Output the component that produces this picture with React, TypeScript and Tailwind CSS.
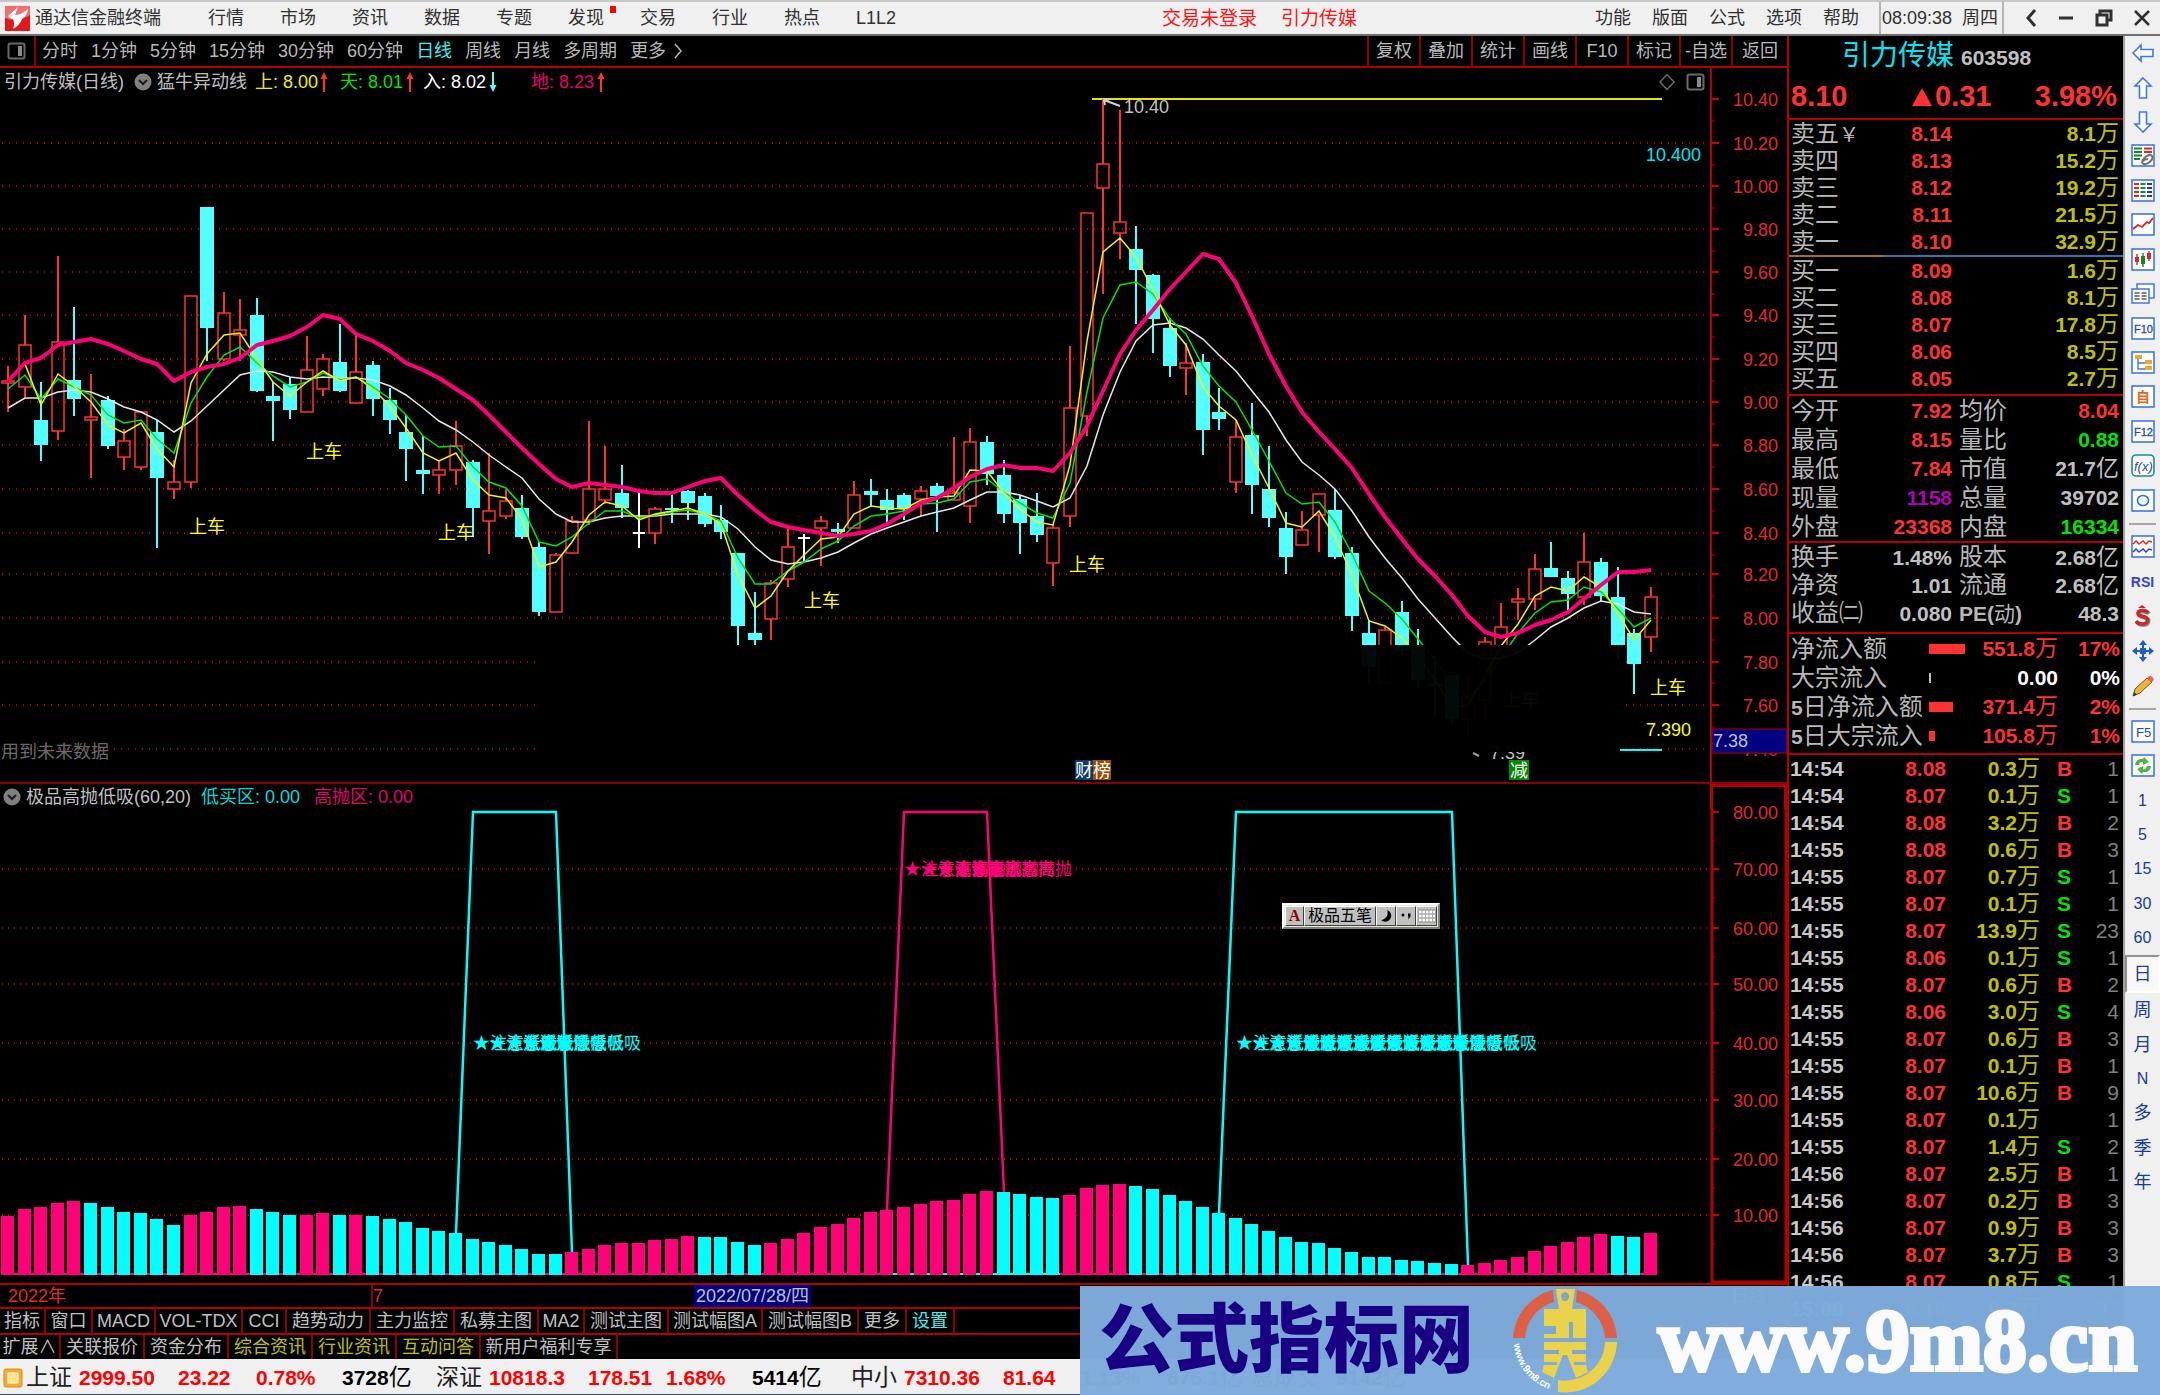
import React from "react";

/* ---------- shared chart geometry ---------- */

const STEP = 16.593;
const cx = (i: number) => Math.round(8 + i * STEP);
const py = (v: number) => Math.round(v / 2.24) - 4;
const iy = (v: number) => Math.round(v / 3) - 38;

const RED = "#ff3232";
const CYAN = "#54ffff";
const PINK = "#ff0078";
const AQUA = "#00ffff";

type Candle = [string, number, number, number, number];

/* kind, high, body top, body bottom, low (plot units, top down) */
const candles: Candle[] = [
  ["r", 615, 650, 653, 718], ["r", 501, 569, 664, 688], ["c", 652, 737, 793, 829], ["r", 370, 562, 761, 782],
  ["c", 484, 648, 691, 728], ["r", 635, 731, 737, 867], ["c", 683, 692, 796, 802], ["r", 757, 785, 819, 849],
  ["r", 720, 720, 842, 849], ["c", 737, 764, 867, 1024], ["r", 827, 876, 892, 913], ["r", 459, 459, 876, 890],
  ["c", 259, 259, 530, 604], ["r", 450, 498, 600, 604], ["r", 467, 536, 546, 604], ["c", 464, 501, 671, 674],
  ["c", 652, 683, 694, 785], ["c", 640, 656, 715, 735], ["r", 548, 624, 718, 718], ["r", 588, 600, 667, 684],
  ["c", 521, 608, 671, 674], ["r", 546, 630, 698, 698], ["c", 605, 613, 691, 728], ["c", 665, 692, 738, 769],
  ["c", 726, 764, 802, 873], ["c", 773, 850, 859, 903], ["r", 829, 849, 861, 903], ["r", 739, 795, 849, 882],
  ["c", 827, 830, 933, 1000], ["r", 810, 940, 963, 1037], ["r", 892, 918, 953, 959], ["c", 905, 935, 1000, 1004],
  ["c", 1010, 1022, 1168, 1175], ["r", 1036, 1040, 1168, 1168], ["r", 951, 963, 1034, 1037], ["r", 739, 892, 960, 973],
  ["r", 796, 892, 916, 925], ["c", 838, 901, 934, 957], ["w", 900, 990, 990, 1024], ["r", 932, 936, 990, 1014],
  ["c", 905, 935, 938, 968], ["c", 893, 895, 923, 960], ["c", 901, 908, 970, 977], ["c", 927, 960, 988, 1004],
  ["c", 1035, 1035, 1199, 1240], ["c", 1123, 1214, 1229, 1240], ["r", 1096, 1101, 1182, 1229], ["r", 981, 1022, 1094, 1111],
  ["w", 992, 1002, 1002, 1055], ["r", 951, 963, 980, 1064], ["c", 968, 982, 988, 1013], ["r", 874, 906, 979, 979],
  ["c", 870, 895, 904, 929], ["c", 891, 917, 938, 967], ["c", 900, 906, 936, 961], ["r", 885, 895, 914, 951],
  ["c", 879, 885, 907, 988], ["r", 776, 900, 916, 916], ["r", 756, 787, 930, 967], ["c", 773, 787, 857, 883],
  ["c", 827, 861, 947, 967], ["c", 906, 914, 968, 1037], ["c", 900, 951, 994, 1010], ["r", 970, 979, 1057, 1108],
  ["r", 571, 710, 953, 977], ["r", 273, 273, 727, 772], ["r", 18, 163, 217, 454], ["r", 43, 294, 318, 376],
  ["c", 302, 353, 402, 521], ["c", 410, 413, 510, 587], ["c", 509, 532, 617, 641], ["r", 565, 610, 621, 682],
  ["c", 588, 606, 759, 816], ["c", 665, 720, 735, 759], ["r", 737, 774, 876, 900], ["c", 699, 770, 883, 948],
  ["c", 796, 891, 957, 977], ["c", 944, 979, 1044, 1082], ["r", 941, 983, 1017, 1017], ["r", 902, 902, 949, 1032],
  ["c", 892, 938, 1044, 1048], ["c", 1021, 1036, 1175, 1210], ["c", 1185, 1214, 1290, 1327], ["r", 1200, 1208, 1325, 1325],
  ["c", 1142, 1166, 1255, 1262], ["c", 1206, 1242, 1320, 1340], ["c", 1265, 1328, 1332, 1397], ["c", 1308, 1308, 1407, 1416],
  ["r", 1310, 1360, 1410, 1440], ["r", 1224, 1235, 1365, 1407], ["r", 1147, 1201, 1245, 1260], ["r", 1113, 1137, 1144, 1186],
  ["r", 1038, 1070, 1138, 1162], ["c", 1011, 1069, 1089, 1089], ["c", 1076, 1092, 1126, 1163], ["r", 991, 1056, 1134, 1151],
  ["c", 1046, 1056, 1131, 1145], ["c", 1066, 1133, 1242, 1272], ["c", 1205, 1214, 1284, 1351], ["r", 1112, 1134, 1222, 1257],
];

const earthLine = [
  650, 609, 597, 569, 562, 556, 567, 582, 600, 612, 650, 630, 618, 612, 598, 569, 559, 548, 528, 501, 510, 544, 559, 582, 609,
  625, 643, 667, 693, 726, 764, 799, 835, 869, 888, 878, 883, 887, 895, 900, 900, 886, 873, 868, 904, 939, 966, 976, 984, 990,
  996, 993, 986, 971, 948, 923, 911, 889, 865, 846, 838, 845, 845, 851, 812, 750, 671, 588, 535, 490, 444, 405, 365, 376, 430,
  505, 590, 660, 719, 764, 802, 845, 903, 955, 1004, 1049, 1087, 1128, 1175, 1211, 1224, 1214, 1197, 1184, 1168, 1137, 1106,
  1077, 1077, 1074,
];
const entryLine = [
  711, 688, 687, 674, 670, 674, 690, 708, 718, 738, 764, 740, 706, 670, 637, 627, 630, 640, 645, 640, 643, 643, 648, 661, 680,
  710, 740, 760, 787, 815, 842, 868, 915, 948, 965, 965, 957, 953, 952, 952, 948, 947, 947, 954, 982, 1022, 1050, 1060, 1056,
  1046, 1033, 1013, 993, 979, 965, 951, 943, 935, 917, 898, 899, 905, 918, 932, 912, 840, 725, 630, 560, 525, 520, 530, 556,
  592, 628, 672, 718, 782, 830, 860, 892, 940, 998, 1047, 1092, 1137, 1180, 1222, 1258, 1272, 1270, 1258, 1230, 1200, 1180,
  1158, 1143, 1149, 1167, 1171,
];
const skyLine = [
  668, 637, 690, 646, 662, 681, 725, 744, 738, 780, 811, 700, 640, 592, 574, 610, 638, 663, 652, 632, 647, 641, 662, 690, 725,
  772, 798, 795, 842, 875, 890, 930, 1010, 1020, 1000, 968, 941, 940, 957, 950, 944, 938, 948, 963, 1045, 1105, 1105, 1076,
  1055, 1025, 1008, 975, 953, 948, 940, 925, 922, 915, 876, 869, 898, 923, 945, 957, 878, 675, 508, 435, 427, 455, 510, 545,
  616, 660, 697, 760, 828, 900, 926, 920, 965, 1037, 1120, 1146, 1182, 1228, 1275, 1325, 1360, 1320, 1270, 1215, 1170, 1145,
  1140, 1110, 1122, 1160, 1201, 1181,
];
const upperLine = [
  612, 703, 634, 660, 697, 748, 767, 744, 802, 842, 655, 590, 547, 542, 600, 652, 683, 652, 627, 650, 641, 668, 705, 755, 810,
  828, 812, 872, 906, 912, 958, 1066, 1054, 1010, 950, 920, 930, 960, 948, 940, 934, 948, 970, 1085, 1157, 1131, 1075, 1040,
  1003, 998, 947, 930, 934, 936, 917, 910, 907, 849, 852, 900, 937, 965, 972, 838, 560, 360, 329, 372, 445, 525, 570, 662, 705,
  738, 815, 890, 967, 976, 940, 1000, 1085, 1188, 1198, 1225, 1265, 1320, 1380, 1375, 1310, 1243, 1195, 1131, 1111, 1119, 1088,
  1110, 1170, 1230, 1184,
];

const points = (list: number[], from = 0) => list.map((v, i) => `${cx(i + from)},${py(v)}`).join(" ");

const priceGrid: [number, string][] = [
  [18, "10.40"], [116, "10.20"], [213, "10.00"], [310, "9.80"], [405, "9.60"], [502, "9.40"], [600, "9.20"], [697, "9.00"],
  [794, "8.80"], [892, "8.60"], [990, "8.40"], [1083, "8.20"], [1181, "8.00"], [1278, "7.80"], [1376, "7.60"], [1473, "7.40"],
];

const signals: [number, number][] = [[189, 975], [306, 807], [438, 988], [804, 1140], [1069, 1060], [1503, 1362], [1650, 1335]];

const runs: [string, number[]][] = [
  ["m", [1335, 1313, 1309, 1296, 1291]],
  ["c", [1295, 1309, 1322, 1327, 1345, 1363]],
  ["m", [1331, 1322, 1309, 1304]],
  ["c", [1313, 1322, 1331]],
  ["m", [1331, 1327]],
  ["c", [1331]],
  ["m", [1331]],
  ["c", [1335, 1345, 1354, 1371, 1380, 1385, 1403, 1412, 1421, 1435, 1448, 1448]],
  ["m", [1444, 1435, 1421, 1416, 1416, 1408, 1403, 1395]],
  ["c", [1399, 1399, 1412, 1421]],
  ["m", [1416, 1403, 1385, 1367, 1358, 1340, 1322, 1318, 1309, 1300, 1291, 1287, 1269, 1260]],
  ["c", [1264, 1269, 1278, 1282]],
  ["m", [1273, 1251, 1242, 1238]],
  ["c", [1246, 1255, 1273, 1291, 1309, 1327, 1340, 1358, 1381, 1399, 1412, 1417, 1430, 1444, 1458, 1458, 1467, 1471, 1476, 1480]],
  ["m", [1481, 1476, 1467, 1458, 1440, 1426, 1412, 1399, 1390]],
  ["c", [1395, 1399]],
  ["m", [1386]],
];
const bars = runs.flatMap(([kind, list]) => list.map((v) => ({ kind, v })));

const levelGrid: [number, string][] = [
  [123, "80.00"], [294, "70.00"], [470, "60.00"], [640, "50.00"], [817, "40.00"], [988, "30.00"], [1163, "20.00"], [1333, "10.00"],
];

const range = (a: number, b: number) => Array.from({ length: b - a + 1 }, (_, i) => a + i);

/* ---------- charts ---------- */

function PriceChart() {
  return (
    <svg viewBox="0 0 1787 687" className="block w-full overflow-visible" fontSize="18" aria-label="日线 K线图">
      {priceGrid.slice(1).map(([v]) => (
        <line key={v} x1="2" x2="1707" y1={py(v)} y2={py(v)} stroke="#b40000" strokeWidth="2" strokeDasharray="1 6" />
      ))}
      <line x1="1092" x2="1662" y1="4" y2="4" stroke="#e6e600" strokeWidth="2" />
      {candles.map(([k, h, t, b, l], i) => {
        const x = cx(i);
        const color = k === "r" ? RED : k === "c" ? CYAN : "#ffffff";
        const top = py(t);
        const height = Math.max(py(b) - top, 2);
        return (
          <g key={i} stroke={color} strokeWidth="2" fill="none">
            {h < t && <line x1={x} x2={x} y1={py(h)} y2={top} />}
            {l > b && <line x1={x} x2={x} y1={py(b)} y2={py(l)} />}
            {k === "w" && <line x1={x - 6} x2={x + 6} y1={top} y2={top} />}
            {k === "r" && <rect x={x - 6} y={top} width="12" height={height} strokeWidth="1.5" />}
            {k === "c" && <rect x={x - 7} y={top} width="14" height={height} fill={color} stroke="none" />}
          </g>
        );
      })}
      <g fill="none" strokeWidth="1.5">
        <polyline points={points(entryLine)} stroke="#e8e8e8" />
        <polyline points={points(skyLine)} stroke="#00e600" />
        <polyline points={points(upperLine, 1)} stroke="#f5f500" />
        <polyline points={points(earthLine)} stroke={PINK} strokeWidth="4" strokeLinejoin="round" />
      </g>
      <text x="1490" y="664" fill="#c0c0c0">7.39</text>
      <g fill="#ffff00">
        {signals.slice(0, 6).map(([x, v]) => (
          <text key={x} x={x} y={py(v) + 7}>上车</text>
        ))}
      </g>
      <rect x="537" y="550" width="1084" height="107" fill="#000" opacity="0.96" />
      <text x="1650" y={py(1335) + 7} fill="#ffff00">上车</text>
      <path d="M1473 658l6 3" stroke="#a0a0a0" strokeWidth="2" />
      <path d="M1120 11l-16 -6m1 5l-1 -5l6 -1" stroke="#d0d0d0" strokeWidth="2" fill="none" />
      <text x="1124" y="18" fill="#c0c0c0">10.40</text>
      <text x="1646" y="66" fill="#00e6f0">10.400</text>
      <text x="1646" y="641" fill="#ffff00">7.390</text>
      <line x1="1620" x2="1662" y1="655" y2="655" stroke={AQUA} strokeWidth="2" />
      <text x="1" y="663" fill="#6a6a6a">用到未来数据</text>
      <rect x="1075" y="665" width="18" height="20" fill="#0a3a6e" />
      <rect x="1093" y="665" width="18" height="20" fill="#9a4c00" />
      <rect x="1509" y="665" width="20" height="20" fill="#008a00" />
      <g fill="#fff">
        <text x="1075" y="682">财</text>
        <text x="1093" y="682">榜</text>
        <text x="1510" y="682">减</text>
      </g>
      <line x1="1711" x2="1711" y1="0" y2="687" stroke="#b40000" strokeWidth="2" />
      {priceGrid.map(([v, label], i) => (
        <g key={label}>
          <line x1="1711" x2="1719" y1={py(v)} y2={py(v)} stroke="#c80000" strokeWidth="2" />
          {i < 15 && <line x1="1711" x2="1715" y1={py(v + 49)} y2={py(v + 49)} stroke="#c80000" strokeWidth="1" />}
          <text x="1778" y={py(v) + 7} fill="#e62828" textAnchor="end">{label}</text>
        </g>
      ))}
      <rect x="1712" y="634" width="75" height="24" fill="#000080" stroke="#b40000" />
      <text x="1713" y="652" fill="#c0c0c0">7.38</text>
    </svg>
  );
}

function LevelChart() {
  const base = iy(1511);
  const band = (from: number, to: number, start: number, end: number) =>
    `${cx(from - 1)},${iy(start)} ${cx(from)},${iy(123)} ${cx(to)},${iy(123)} ${cx(to + 1)},${iy(end)}`;
  return (
    <svg viewBox="0 0 1787 474" className="block w-full overflow-visible" fontSize="17" aria-label="极品高抛低吸">
      {levelGrid.slice(1).map(([v]) => (
        <line key={v} x1="2" x2="1709" y1={iy(v)} y2={iy(v)} stroke="#b40000" strokeWidth="2" strokeDasharray="1 5" />
      ))}
      <line x1="1" x2="1657" y1={base - 1} y2={base - 1} stroke={PINK} strokeWidth="2" />
      <line x1="880" x2="1060" y1={base - 1} y2={base - 1} stroke={AQUA} strokeWidth="2" />
      {bars.map(({ kind, v }, i) => (
        <rect key={i} x={cx(i) - 7} y={iy(v)} width="13" height={base - iy(v)} fill={kind === "m" ? PINK : AQUA} />
      ))}
      <g fill="none" strokeWidth="2.5">
        <polyline points={band(28, 33, 1385, 1444)} stroke={AQUA} />
        <polyline points={band(54, 59, 1318, 1264)} stroke={PINK} />
        <polyline points={band(74, 87, 1327, 1481)} stroke={AQUA} />
      </g>
      {range(28, 33).map((i) => <text key={i} x={cx(i)} y="240" fill={AQUA}>★注意低吸</text>)}
      {range(54, 59).map((i) => <text key={i} x={cx(i)} y="66" fill={PINK}>★注意高抛</text>)}
      {range(74, 87).map((i) => <text key={i} x={cx(i)} y="240" fill={AQUA}>★注意低吸</text>)}
      <path d="M1712 0V473H1786V0" fill="none" stroke="#b40000" strokeWidth="3" />
      {levelGrid.map(([v, label]) => (
        <g key={label}>
          <line x1="1712" x2="1719" y1={iy(v)} y2={iy(v)} stroke="#c80000" strokeWidth="2" />
          <line x1="1712" x2="1715" y1={iy(v + 87)} y2={iy(v + 87)} stroke="#c80000" />
          <text x="1778" y={iy(v) + 7} fontSize="18" fill="#e62828" textAnchor="end">{label}</text>
        </g>
      ))}
    </svg>
  );
}

/* ---------- small drawings ---------- */

function Chevron() {
  return (
    <svg viewBox="0 0 18 18" className="size-[18px] shrink-0">
      <circle cx="9" cy="9" r="8.5" fill="#808080" />
      <path d="M5 7l4 4l4 -4" fill="none" stroke="#1a1a1a" strokeWidth="2" />
    </svg>
  );
}

function Arrow({ down }: { down?: boolean }) {
  return (
    <svg viewBox="0 0 8 20" className="h-5 w-2 shrink-0">
      {down ? (
        <path d="M3 0H5V13H7.5L4 20L0.5 13H3Z" fill={CYAN} />
      ) : (
        <path d="M3 20H5V7H7.5L4 0L0.5 7H3Z" fill={RED} />
      )}
    </svg>
  );
}

function PaneIcon({ className }: { className: string }) {
  return (
    <svg viewBox="0 0 20 18" className={className}>
      <rect x="1.500" y="1.500" width="16" height="15" rx="2" fill="none" stroke="#6a6a6a" strokeWidth="2" />
      <rect x="11" y="4" width="4" height="10" fill="#8a8a8a" />
    </svg>
  );
}

function Framed({ children, color = "#3c78e6" }: { children: React.ReactNode; color?: string }) {
  return (
    <svg viewBox="0 0 24 24" className="size-6" fontSize="11">
      <rect x="1" y="1" width="22" height="21" fill="#fff" stroke={color} strokeWidth="1.6" />
      {children}
    </svg>
  );
}

const blue = "#3c78e6";
const arrowOutline = "M2 12L10 4V8.500H22V15.500H10V20Z";

const toolIcons: [string, React.ReactNode][] = [
  ["后退", <svg viewBox="0 0 24 24" className="size-6"><path d={arrowOutline} fill="#fff" stroke={blue} strokeWidth="1.6" /></svg>],
  ["向上", <svg viewBox="0 0 24 24" className="size-6"><path d={arrowOutline} transform="rotate(90 12 12)" fill="#fff" stroke={blue} strokeWidth="1.6" /></svg>],
  ["向下", <svg viewBox="0 0 24 24" className="size-6"><path d={arrowOutline} transform="rotate(-90 12 12)" fill="#fff" stroke={blue} strokeWidth="1.6" /></svg>],
  ["报价关联", <Framed><path d="M3 4.500h8M3 8h8M3 11.500h8M3 15h6" stroke="#0a8a28" strokeWidth="2" /><path d="M13 4.500h8M13 8h8" stroke="#e61e1e" strokeWidth="2" /><path d="M11 17c2-4 8-8 10-5s-4 9-8 8s-1-5 4-5" fill="none" stroke="#707070" strokeWidth="2" /></Framed>],
  ["行情列表", <Framed><g strokeWidth="2"><path d="M3 5h5M3 9h5M3 13h5M3 17h5" stroke="#f02020" /><path d="M9.500 5h5M9.500 9h5M9.500 13h5M9.500 17h5" stroke="#109030" /><path d="M16 5h5M16 9h5M16 13h5M16 17h5" stroke="#2030e0" /></g></Framed>],
  ["分时图", <Framed><path d="M2 16l5-4l4 2l5-5l2 1l4-5" fill="none" stroke="#e62020" strokeWidth="1.8" /></Framed>],
  ["K线图", <Framed><path d="M6 6v11M18 3v10" stroke="#e62020" strokeWidth="1.4" /><path d="M12 5v14" stroke="#0a8a28" strokeWidth="1.4" /><path d="M4 9h4v5h-4zM16 5h4v6h-4z" fill="#e62020" /><path d="M10 8h4v8h-4z" fill="#0a8a28" /></Framed>],
  ["窗口", <svg viewBox="0 0 24 24" className="size-6"><path d="M6 2h17v14h-17z" fill="#fff" stroke={blue} strokeWidth="1.5" /><path d="M1 7h17v14h-17z" fill="#fff" stroke={blue} strokeWidth="1.5" /><path d="M3.500 11h5M3.500 14h5M3.500 17h5M10.500 11h5M10.500 14h5M10.500 17h5" stroke="#555" strokeWidth="1.5" /></svg>],
  ["F10资料", <Framed><text x="3" y="16" fill="#1e46c8" stroke="#1e46c8" strokeWidth="0.3">F10</text></Framed>],
  ["板块树", <Framed><path d="M7 8v10h8M7 12h8" fill="none" stroke={blue} strokeWidth="1.4" /><path d="M4 4h7v4h-7zM14 9h7v4h-7zM14 15h7v4h-7z" fill="#f5a623" /></Framed>],
  ["自选", <Framed><text x="5" y="17" fontSize="14" fill="#f06414" fontWeight="bold">自</text></Framed>],
  ["F12交易", <Framed><text x="3" y="16" fill="#1e46c8" stroke="#1e46c8" strokeWidth="0.3">F12</text></Framed>],
  ["公式", <svg viewBox="0 0 24 24" className="size-6" fontSize="13"><rect x="1" y="1" width="22" height="21" rx="4" fill="#fff" stroke="#148c96" strokeWidth="1.6" /><text x="3" y="16.500" fill="#1e46c8" fontStyle="italic">f(x)</text></svg>],
  ["圆", <Framed><ellipse cx="12" cy="11.500" rx="5.500" ry="5" fill="none" stroke="#1e6ee6" strokeWidth="1.6" /></Framed>],
];

const drawIcons: [string, React.ReactNode][] = [
  ["多图", <Framed><path d="M2 9l3-3l3 3l4-3l3 3l3-3l3 1" fill="none" stroke="#e62020" strokeWidth="1.5" /><path d="M2 17l3-3l3 3l4-3l3 3l3-3l3 1" fill="none" stroke="#2040e0" strokeWidth="1.5" /></Framed>],
  ["RSI指标", <span className="text-[14px] font-bold text-[#3246d2]">RSI</span>],
  ["资金", <svg viewBox="0 0 24 24" className="size-6"><path d="M17 9q-2-3-6-2.500q-5 .5-4 3.500q.5 1.500 5 2.500q5 1 4.500 4q-.5 3.500-5.500 3.500q-4 0-6-3" fill="none" stroke="#909090" strokeWidth="4" transform="translate(1 1)" /><path d="M17 9q-2-3-6-2.500q-5 .5-4 3.500q.5 1.500 5 2.500q5 1 4.500 4q-.5 3.500-5.500 3.500q-4 0-6-3" fill="none" stroke="#c82828" strokeWidth="3.5" /><path d="M7 4l4-3l4 3z" fill="#c82828" /></svg>],
  ["移动", <svg viewBox="0 0 24 24" className="size-6"><path d="M12 1l4 5h-8zM12 23l4-5h-8zM1 12l5-4v8zM23 12l-5-4v8zM9 9h6v6h-6z" fill="#1e5ac8" /><path d="M12 5v14M5 12h14" stroke="#1e5ac8" strokeWidth="2" /></svg>],
  ["画笔", <svg viewBox="0 0 24 24" className="size-6"><path d="M2 22l2-7l12-11l5 4l-12 11z" fill="#f0b43c" stroke="#785014" strokeWidth="1" /><path d="M16 4l3-2.500q3 1 4 4l-2 2.500z" fill="#e66464" /><path d="M2 22l1-4l3 2.500z" fill="#333" /></svg>],
];

const periods = ["1", "5", "15", "30", "60", "日", "周", "月", "N", "多", "季", "年"];

function ToolButton({ label, children }: { label: string; children: React.ReactNode }) {
  return (
    <button type="button" aria-label={label} className="flex flex-1 items-center justify-center">
      {children}
    </button>
  );
}

function Sidebar() {
  return (
    <aside className="w-[37px] shrink-0 border-l-2 border-[#a0a0a0] bg-[#f0f0f0] text-[18px] leading-none text-[#143c96]">
      <div className="flex h-[482px] flex-col">
        {toolIcons.map(([label, icon]) => <ToolButton key={label} label={label}>{icon}</ToolButton>)}
      </div>
      <hr className="mx-1 my-[5px] border-t-2 border-[#a8a8a8]" />
      <div className="flex h-[173px] flex-col">
        {drawIcons.map(([label, icon]) => <ToolButton key={label} label={label}>{icon}</ToolButton>)}
      </div>
      <hr className="mx-1 my-[5px] border-t-2 border-[#a8a8a8]" />
      <div className="flex h-[484px] flex-col">
        <ToolButton label="F5切换"><Framed><text x="5" y="16.500" fontSize="13" fill="#1e46c8">F5</text></Framed></ToolButton>
        <ToolButton label="刷新">
          <Framed>
            <path d="M4 11q1-7 8-6l1-2l5 5l-6 3l0-3q-3-1-4 3zM20 12q-1 7-8 6l-1 2l-5-5l6-3l0 3q3 1 4-3z" fill="#50b43c" />
          </Framed>
        </ToolButton>
        {periods.map((p) => (
          <button
            key={p}
            type="button"
            className={
              p === "日"
                ? "flex flex-1 items-center justify-center border-2 border-r-white border-b-white border-l-[#909090] border-t-[#909090] bg-[#f8f8f8]"
                : "flex flex-1 items-center justify-center"
            }
          >
            <span className={/\d|N/.test(p) ? "text-[16px]" : "text-[18px]"}>{p}</span>
          </button>
        ))}
      </div>
    </aside>
  );
}

/* ---------- header ---------- */

function Header() {
  return (
    <header className="flex h-[36px] items-center border-t-2 border-b-2 border-t-[#c8c8c8] border-b-[#6e6e6e] bg-[#f0f0f0] text-[18px] leading-none whitespace-nowrap text-[#303030]">
      <svg viewBox="0 0 25 25" className="ml-[5px] size-[25px]">
        <rect width="25" height="25" fill="#e11919" />
        <path d="M0 0h25v9q-12 8-25 3z" fill="#f06e6e" />
        <path d="M3 10L13 1L10 9q6 0 13-6q-1 7-6 10q-2 6-9 10q2-6 0-10q-3 0-5-3z" fill="#fff" />
      </svg>
      <span className="ml-[5px] w-[173px]">通达信金融终端</span>
      <nav className="flex gap-9">
        {["行情", "市场", "资讯", "数据", "专题", "发现", "交易", "行业", "热点", "L1L2"].map((m) => (
          <button key={m} type="button" className="relative">
            {m}
            {m === "发现" && <i className="absolute -top-[3px] -right-3 h-[7px] w-[6px] bg-[#ff0000]" />}
          </button>
        ))}
      </nav>
      <div className="flex-1" />
      <div className="flex gap-6 text-[19px] text-[#ff1414]">
        <button type="button">交易未登录</button>
        <button type="button">引力传媒</button>
      </div>
      <nav className="ml-[238px] flex gap-[21px]">
        {["功能", "版面", "公式", "选项", "帮助"].map((m) => <button key={m} type="button">{m}</button>)}
      </nav>
      <div className="ml-5 flex h-full w-[125px] items-center justify-between border-x-2 border-[#b4b4b4] pr-1 pl-px">
        <time>08:09:38</time>
        <span>周四</span>
      </div>
      <div className="flex w-[156px] items-center justify-between pr-[10px] pl-5">
        <button type="button" aria-label="返回">
          <svg viewBox="0 0 14 18" className="h-[18px] w-[14px]"><path d="M11 1L4 9l7 8" fill="none" stroke="#303030" strokeWidth="3" /></svg>
        </button>
        <button type="button" aria-label="最小化">
          <svg viewBox="0 0 14 18" className="h-[18px] w-[14px]"><path d="M0 9h14" stroke="#303030" strokeWidth="3" /></svg>
        </button>
        <button type="button" aria-label="还原">
          <svg viewBox="0 0 18 18" className="size-[18px]"><path d="M5 5V2h11v9h-3M2 6h10v10H2z" fill="none" stroke="#303030" strokeWidth="3" /></svg>
        </button>
        <button type="button" aria-label="关闭">
          <svg viewBox="0 0 16 16" className="size-4"><path d="M1 1l14 14M15 1L1 15" stroke="#303030" strokeWidth="2.500" /></svg>
        </button>
      </div>
    </header>
  );
}

function Toolbar() {
  return (
    <div className="flex h-[32px] items-stretch border-b-2 border-[#b40000] text-[18px] leading-none whitespace-nowrap text-[#b8b8b8]">
      <button type="button" aria-label="侧栏" className="flex w-[36px] items-center justify-center border-r-2 border-[#8c0000]">
        <PaneIcon className="h-[18px] w-5" />
      </button>
      <nav className="flex items-center gap-[13px] pl-[6px]">
        {["分时", "1分钟", "5分钟", "15分钟", "30分钟", "60分钟", "日线", "周线", "月线", "多周期"].map((p) => (
          <button key={p} type="button" className={p === "日线" ? "text-[#3cf0f0]" : ""}>{p}</button>
        ))}
        <button type="button" className="flex items-center gap-2">
          更多
          <svg viewBox="0 0 8 16" className="h-4 w-2"><path d="M1 1l6 7l-6 7" fill="none" stroke="#b8b8b8" strokeWidth="1.500" /></svg>
        </button>
      </nav>
      <div className="flex-1" />
      {["复权", "叠加", "统计", "画线", "F10", "标记", "-自选", "返回"].map((b) => (
        <button key={b} type="button" className="w-[52px] border-l-2 border-[#8c0000] text-center last:w-[56px]">{b}</button>
      ))}
    </div>
  );
}

/* ---------- quote panel ---------- */

const asks = [["卖五", "8.14", "8.1万"], ["卖四", "8.13", "15.2万"], ["卖三", "8.12", "19.2万"], ["卖二", "8.11", "21.5万"], ["卖一", "8.10", "32.9万"]];
const bids = [["买一", "8.09", "1.6万"], ["买二", "8.08", "8.1万"], ["买三", "8.07", "17.8万"], ["买四", "8.06", "8.5万"], ["买五", "8.05", "2.7万"]];

const R = "text-[#ff3232]";
const G = "text-[#00e600]";
const W = "text-[#c0c0c0]";
const facts = [
  ["今开", "7.92", R, "均价", "8.04", R],
  ["最高", "8.15", R, "量比", "0.88", G],
  ["最低", "7.84", R, "市值", "21.7亿", W],
  ["现量", "1158", "text-[#b400b4]", "总量", "39702", W],
  ["外盘", "23368", R, "内盘", "16334", G],
];
const shares = [
  ["换手", "1.48%", W, "股本", "2.68亿", W],
  ["净资", "1.01", W, "流通", "2.68亿", W],
  ["收益㈡", "0.080", W, "PE(动)", "48.3", W],
];
const flows = [
  ["", "净流入额", "w-[36px]", "551.8万", "17%", R],
  ["", "大宗流入", "w-[2px]", "0.00", "0%", "text-white"],
  ["5", "日净流入额", "w-[24px]", "371.4万", "2%", R],
  ["5", "日大宗流入", "w-[6px]", "105.8万", "1%", R],
];
const ticks = [
  ["14:54", "8.08", "0.3", "B", "1"], ["14:54", "8.07", "0.1", "S", "1"], ["14:54", "8.08", "3.2", "B", "2"],
  ["14:55", "8.08", "0.6", "B", "3"], ["14:55", "8.07", "0.7", "S", "1"], ["14:55", "8.07", "0.1", "S", "1"],
  ["14:55", "8.07", "13.9", "S", "23"], ["14:55", "8.06", "0.1", "S", "1"], ["14:55", "8.07", "0.6", "B", "2"],
  ["14:55", "8.06", "3.0", "S", "4"], ["14:55", "8.07", "0.6", "B", "3"], ["14:55", "8.07", "0.1", "B", "1"],
  ["14:55", "8.07", "10.6", "B", "9"], ["14:55", "8.07", "0.1", "", "1"], ["14:55", "8.07", "1.4", "S", "2"],
  ["14:56", "8.07", "2.5", "B", "1"], ["14:56", "8.07", "0.2", "B", "3"], ["14:56", "8.07", "0.9", "B", "3"],
  ["14:56", "8.07", "3.7", "B", "3"], ["14:56", "8.07", "0.8", "S", "1"],
];

/* Digits are bold, Chinese unit characters stay light and larger. */
function Num({ value }: { value: string }) {
  const unit = value.match(/[万亿]$/)?.[0];
  return (
    <>
      {unit ? value.slice(0, -1) : value}
      {unit && <span className="text-[23px] font-normal">{unit}</span>}
    </>
  );
}

function Book({ rows, yen }: { rows: string[][]; yen?: boolean }) {
  return (
    <table className="w-full table-fixed">
      <tbody>
        {rows.map(([name, price, vol], i) => (
          <tr key={name} className="h-[27px]">
            <th scope="row" className="w-[95px] pl-[2px] text-left text-[24px] font-normal text-[#b8b8b8]">
              {name}{yen && i === 0 && <span className="text-[20px]">￥</span>}
            </th>
            <td className="w-[68px] text-right font-bold text-[#ff3232]">{price}</td>
            <td className="pr-[4px] text-right font-bold text-[#c0c000]"><Num value={vol} /></td>
          </tr>
        ))}
      </tbody>
    </table>
  );
}

function Facts({ rows, className }: { rows: string[][]; className: string }) {
  return (
    <table className="w-full table-fixed">
      <tbody>
        {rows.map(([a, av, ac, b, bv, bc]) => (
          <tr key={a} className={className}>
            <th scope="row" className="w-[78px] pl-[2px] text-left text-[24px] font-normal text-[#b8b8b8]">{a}</th>
            <td className={"w-[85px] text-right font-bold " + ac}>{av}</td>
            <th scope="row" className="w-[78px] pl-[7px] text-left text-[24px] font-normal text-[#b8b8b8]">
              {b === "PE(动)" ? <><b className="text-[21px]">PE(</b><span className="text-[21px]">动</span><b className="text-[21px]">)</b></> : b}
            </th>
            <td className={"pr-[4px] text-right font-bold " + bc}><Num value={bv} /></td>
          </tr>
        ))}
      </tbody>
    </table>
  );
}

function QuotePanel() {
  return (
    <section className="w-[336px] shrink-0 border-l-2 border-[#b40000] bg-black text-[21px] leading-none whitespace-nowrap">
      <div className="flex h-[39px] items-center pl-[53px] gap-[7px]">
        <h1 className="text-[28px] text-[#00e6f5]">引力传媒</h1>
        <span className="pt-1 font-bold text-[#c0c0c0]">603598</span>
      </div>
      <div className="flex h-[45px] items-center border-b-2 border-[#b40000] pr-[6px] pl-[2px] text-[29px] font-bold text-[#ff3232]">
        <span className="w-[121px]">8.10</span>
        <svg viewBox="0 0 20 18" className="mr-[3px] h-[18px] w-5"><path d="M10 0L20 18H0Z" fill={RED} /></svg>
        <span>0.31</span>
        <span className="flex-1 text-right">3.98%</span>
      </div>
      <Book rows={asks} yen />
      <div className="flex h-[2px]"><i className="w-[95px] bg-[#a07800]" /><i className="flex-1 bg-[#2878b4]" /></div>
      <div className="border-b-2 border-[#b40000] pb-[2px]"><Book rows={bids} /></div>
      <div className="border-b-2 border-[#b40000]"><Facts rows={facts} className="h-[29px]" /></div>
      <div className="border-b-2 border-[#b40000] pb-[5px]"><Facts rows={shares} className="h-[28px]" /></div>
      <table className="mb-[3px] w-full table-fixed">
        <tbody>
          {flows.map(([n, label, w, amount, pct, color]) => (
            <tr key={label} className="h-[29px]">
              <th scope="row" className="w-[140px] pl-[2px] text-left text-[24px] font-normal text-[#b8b8b8]">
                {n && <b className="text-[21px]">{n}</b>}{label}
              </th>
              <td className="w-[36px]"><i className={(amount === "0.00" ? "block h-[10px] bg-[#c0c0c0] " : "block h-[10px] bg-[#ff3232] ") + w} /></td>
              <td className={"w-[93px] text-right font-bold " + color}><Num value={amount} /></td>
              <td className={"pr-[3px] text-right font-bold " + color}>{pct}</td>
            </tr>
          ))}
        </tbody>
      </table>
      <div className="border-t-2 border-[#b40000]">
        <table className="w-full table-fixed">
          <tbody>
            {[...ticks, ["15:00", "8.10", "9.7", "", "97"]].map(([t, p, v, s, n], i) => (
              <tr key={i} className="h-[27px]">
                <td className="w-[90px] pl-px font-bold text-[#c8c8c8]">{t}</td>
                <td className="w-[67px] text-right font-bold text-[#ff3232]">{p}</td>
                <td className="w-[94px] text-right font-bold text-[#c0c000]"><Num value={v + "万"} /></td>
                <td className={s === "B" ? "w-[46px] pl-[17px] font-bold text-[#ff3232]" : "w-[46px] pl-[17px] font-bold text-[#00e600]"}>{s}</td>
                <td className="pr-[4px] text-right text-[#808080]">{n}</td>
              </tr>
            ))}
          </tbody>
        </table>
      </div>
    </section>
  );
}

/* ---------- bottom bars ---------- */

const indicatorTabs = [
  ["指标", "w-[46px]"], ["窗口", "w-[47px]"], ["MACD", "w-[63px]"], ["VOL-TDX", "w-[87px]"], ["CCI", "w-[44px]"],
  ["趋势动力", "w-[84px]"], ["主力监控", "w-[84px]"], ["私募主图", "w-[84px]"], ["MA2", "w-[46px]"], ["测试主图", "w-[84px]"],
  ["测试幅图A", "w-[94px]"], ["测试幅图B", "w-[96px]"], ["更多", "w-[48px]"], ["设置", "w-[48px]"],
];
const infoTabs = [
  ["扩展∧", "w-[61px]"], ["关联报价", "w-[84px]"], ["资金分布", "w-[84px]"], ["综合资讯", "w-[84px] text-[#c0c000]"],
  ["行业资讯", "w-[84px] text-[#c0c000]"], ["互动问答", "w-[84px] text-[#c0c000]"], ["新用户福利专享", "w-[137px]"],
];

function Tabs({ items }: { items: string[][] }) {
  return (
    <div className="flex h-[26px] border-t-2 border-[#b40000] text-[18px] leading-none whitespace-nowrap text-[#c0c0c0]">
      {items.map(([label, cls]) => (
        <button key={label} type="button" className={"flex shrink-0 items-center justify-center border-r-2 border-[#8c0000] " + (label === "设置" ? "text-[#3cf0f0] " : "") + cls}>
          {label}
        </button>
      ))}
    </div>
  );
}

const indices = [
  ["上证", "2999.50", "23.22", "0.78%", "3728", "w-[410px]"],
  ["深证", "10818.3", "178.51", "1.68%", "5414", "w-[415px]"],
  ["中小", "7310.36", "81.64", "1.13%", "676.1", "w-[400px]"],
];

function StatusBar() {
  return (
    <footer className="flex h-[36px] items-center overflow-hidden border-b border-[#304860] bg-[#f0f0f0] pt-[2px] pl-[3px] text-[21px] leading-none font-bold whitespace-nowrap text-[#ff0000]">
      <svg viewBox="0 0 20 20" className="mr-[3px] size-5 shrink-0">
        <rect x="1" y="1" width="18" height="18" rx="2" fill="#f5aa28" stroke="#e08c14" />
        <rect x="5" y="5" width="10" height="10" fill="#ffe08c" stroke="#fff" />
      </svg>
      {indices.map(([name, price, diff, pct, vol, w]) => (
        <div key={name} className={"flex shrink-0 items-center " + w}>
          <span className="w-[53px] text-[23px] font-normal text-[#202020]">{name}</span>
          <span className="w-[99px]">{price}</span>
          <span className="w-[78px]">{diff}</span>
          <span className="w-[86px]">{pct}</span>
          <span className="text-black">{vol}<span className="text-[23px] font-normal">亿</span></span>
        </div>
      ))}
      <span className="mr-4 text-[23px] font-normal text-[#202020]">总成交</span>
      <span className="text-black">9142<span className="text-[23px] font-normal">亿</span></span>
    </footer>
  );
}

function Banner() {
  return (
    <div className="absolute right-0 bottom-0 flex h-[109px] w-1/2 items-center bg-[#7dabda]/98 pl-[19px] whitespace-nowrap">
      <span className="text-[75px] leading-none font-black text-[#1a0082]">公式指标网</span>
      <svg viewBox="0 0 110 106" className="ml-[36px] h-[106px] w-[110px] shrink-0 overflow-visible" fill="#ebd24b">
        <path d="M3 50A52 52 0 0 1 43 2L44 14A40 40 0 0 0 15 50Z" fill="#dc5f46" />
        <path d="M67 2A52 52 0 0 1 107 50H95A40 40 0 0 0 66 14Z" fill="#dc5f46" />
        <path d="M107 54A52 52 0 0 1 48 104V92A40 40 0 0 0 95 54Z" />
        <path fillRule="evenodd" d="M46 1H65L62 21H76V50H63V34H59V50H34V46H46V38H34V21H49ZM55 4a4 4.500 0 1 0 .1 0z" />
        <path d="M34 54H76V62H62V66H76V74H64V77H76L78 84L66 90L57 67H53L44 90L32 84L34 77H47V74H34V66H49V62H34Z" />
        <path id="rim" d="M4 56A52 52 0 0 0 47 103" fill="none" />
        <text fill="#fff" fontSize="10" fontWeight="bold"><textPath href="#rim">www.9m8.cn</textPath></text>
      </svg>
      <span className="ml-[38px] font-['Liberation_Serif'] text-[88px] leading-none font-bold text-[#fafafa] [-webkit-text-stroke:4px_#fafafa]">www.9m8.cn</span>
    </div>
  );
}

function InputMethodBar() {
  const cell = "flex h-full items-center justify-center border border-t-white border-l-white border-r-[#404040] border-b-[#404040] bg-[#c0c0c0]";
  return (
    <div className="absolute top-[903px] left-[1282px] flex h-[26px] w-[158px] items-center border-2 border-t-white border-l-white border-r-[#808080] border-b-[#808080] bg-[#ece9d8] p-px text-[16px] leading-none whitespace-nowrap text-black">
      <button type="button" className={cell + " w-[19px] font-['Liberation_Serif'] font-bold text-[#8c0000]"}>A</button>
      <button type="button" className={cell + " w-[72px]"}>极品五笔</button>
      <button type="button" aria-label="半角" className={cell + " w-[20px]"}>
        <svg viewBox="0 0 14 14" className="size-[14px]"><path d="M8 1A6 6 0 1 1 2 11A7 7 0 0 0 8 1Z" /></svg>
      </button>
      <button type="button" aria-label="标点" className={cell + " w-[20px]"}>
        <svg viewBox="0 0 14 14" className="size-[14px]"><circle cx="4" cy="6" r="1.500" /><path d="M9 4.500h2.500v3l-2 3v-3H9z" /></svg>
      </button>
      <button type="button" aria-label="软键盘" className={cell + " w-[21px]"}>
        <svg viewBox="0 0 18 14" className="h-[14px] w-[18px]"><rect width="18" height="14" fill="#a8a8a8" /><path d="M1 3h16M1 7h16M1 11h16" stroke="#fff" strokeWidth="2.500" strokeDasharray="2.500 1" /></svg>
      </button>
    </div>
  );
}

export default function App() {
  return (
    <div className="relative min-h-screen overflow-hidden bg-black font-['Liberation_Sans','Noto_Sans_CJK_SC',sans-serif]">
      <Header />
      <div className="flex">
        <main className="min-w-0 flex-1">
          <Toolbar />
          <div className="flex h-[27px] text-[18px] leading-none whitespace-nowrap text-[#c0c0c0]">
            <div className="flex flex-1 items-center pl-1">
              <span className="w-[130px]">引力传媒(日线)</span>
              <Chevron />
              <span className="ml-[5px] w-[98px]">猛牛异动线</span>
              <span className="w-[65px] text-[#f0f000]">上: 8.00</span><Arrow />
              <span className="ml-[12px] w-[66px] text-[#00e600]">天: 8.01</span><Arrow />
              <span className="ml-[9px] w-[66px] text-white">入: 8.02</span><Arrow down />
              <span className="ml-[34px] w-[66px] text-[#e6006e]">地: 8.23</span><Arrow />
              <div className="flex-1" />
              <svg viewBox="0 0 16 18" className="mr-[11px] h-[18px] w-4"><path d="M8 1.500L15 9L8 16.500L1 9Z" fill="none" stroke="#6a6a6a" strokeWidth="1.500" /></svg>
              <PaneIcon className="mr-[4px] h-[18px] w-5" />
            </div>
            <div className="w-[77px] border-l-2 border-[#b40000]" />
          </div>
          <PriceChart />
          <div className="flex h-[27px] border-t-2 border-[#8c0000] text-[18px] leading-none whitespace-nowrap">
            <div className="flex flex-1 items-center pl-[3px] text-[#c0c0c0]">
              <Chevron />
              <span className="ml-[5px] w-[175px]">极品高抛低吸(60,20)</span>
              <span className="w-[113px] text-[#00dcdc]">低买区: 0.00</span>
              <span className="text-[#e6006e]">高抛区: 0.00</span>
            </div>
            <div className="w-[77px] border-3 border-b-0 border-[#b40000]" />
          </div>
          <LevelChart />
          <div className="flex h-[24px] items-stretch border-t-2 border-[#b40000] text-[18px] leading-none whitespace-nowrap text-[#e62828]">
            <span className="flex w-[371px] items-center pl-2">2022年</span>
            <span className="flex w-[323px] items-center border-l-2 border-[#8c0000]">7</span>
            <span className="flex w-[117px] items-center justify-center bg-[#000080] text-[#c0c0c0]">2022/07/28/四</span>
            <span className="flex-1" />
            <span className="flex items-center pr-5 text-[#c0c0c0]">日线</span>
          </div>
          <Tabs items={indicatorTabs} />
          <Tabs items={infoTabs} />
        </main>
        <QuotePanel />
        <Sidebar />
      </div>
      <StatusBar />
      <Banner />
      <InputMethodBar />
    </div>
  );
}
